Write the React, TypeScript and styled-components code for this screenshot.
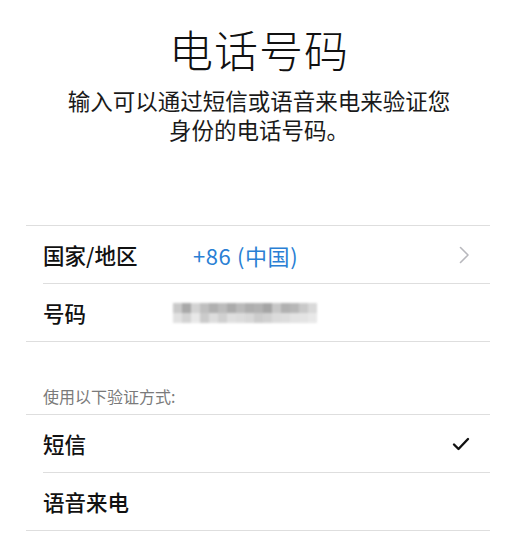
import React from 'react';
import styled, { createGlobalStyle } from 'styled-components';

const GlobalStyle = createGlobalStyle`
  html, body {
    margin: 0;
    padding: 0;
    background: #ffffff;
  }
  body {
    font-family: "Noto Sans CJK SC", "Noto Sans", sans-serif;
    color: #111;
  }
`;

const Page = styled.div`
  width: 518px;
  min-height: 545px;
  display: flex;
  flex-direction: column;
  background: #fff;
`;

const Title = styled.h1`
  margin: 24px 0 0;
  text-align: center;
  font-size: 44px;
  line-height: 50px;
  font-weight: 200;
  letter-spacing: 1px;
  color: #111;
`;

const Subtitle = styled.p`
  margin: 12px 0 0;
  text-align: center;
  font-size: 22.5px;
  line-height: 29px;
  font-weight: 400;
  color: #1a1a1a;
`;

const Group = styled.div<{ $top: number }>`
  margin: ${(p) => p.$top}px 28px 0 26px;
  border-top: 1px solid #dedede;
  border-bottom: 1px solid #dedede;
  display: flex;
  flex-direction: column;
`;

const Row = styled.div`
  display: flex;
  padding-left: 17px;
`;

const RowInner = styled.div<{ $last?: boolean }>`
  flex: 1;
  height: 57px;
  display: flex;
  align-items: center;
  padding-right: 20px;
  border-bottom: ${(p) => (p.$last ? 'none' : '1px solid #dedede')};
`;

const Label = styled.span<{ $width?: number }>`
  width: ${(p) => (p.$width ? `${p.$width}px` : 'auto')};
  font-size: 21.5px;
  font-weight: 500;
  color: #111;
  flex-shrink: 0;
`;

const Value = styled.span`
  flex: 1;
  font-size: 22px;
  letter-spacing: 0.6px;
  color: #2a7fd4;
`;

const Spacer = styled.span`
  flex: 1;
`;

const BlurField = styled.div`
  display: grid;
  grid-template-columns: repeat(16, 9px);
  grid-template-rows: repeat(2, 10px);
  filter: blur(1.2px);
  opacity: 0.9;
`;

const Cell = styled.span``;

const SectionHeader = styled.div`
  padding: 44px 0 8px 43px;
  font-size: 16px;
  line-height: 20px;
  color: #7a7a7a;
`;

const blurTop = ['#c4c4c4', '#a0a0a0', '#cfcfcf', '#b9b9b9', '#a8a8a8', '#b5b5b5', '#a3a3a3', '#b3b3b3', '#a6a6a6', '#aaaaaa', '#9c9c9c', '#c2c2c2', '#a9a9a9', '#b0b0b0', '#c4c4c4', '#d5d5d5'];
const blurBottom = ['#dedede', '#cfcfcf', '#e6e6e6', '#c6c6c6', '#dadada', '#cccccc', '#dcdcdc', '#d9d9d9', '#d4d4d4', '#c7c7c7', '#cdcdcd', '#d8d8d8', '#dadada', '#e0e0e0', '#e2e2e2', '#e6e6e6'];

const Chevron = () => (
  <svg width="11" height="18" viewBox="0 0 11 18" fill="none">
    <path d="M1.5 1.5 L9 9 L1.5 16.5" stroke="#b8b8bd" strokeWidth="1.6" strokeLinecap="round" strokeLinejoin="round" />
  </svg>
);

const Check = () => (
  <svg width="18" height="14" viewBox="0 0 18 14" fill="none">
    <path d="M2 7.5 L6.5 12 L16 2" stroke="#111" strokeWidth="2.4" strokeLinecap="round" strokeLinejoin="round" />
  </svg>
);

const App: React.FC = () => {
  return (
    <Page>
      <GlobalStyle />
      <Title>电话号码</Title>
      <Subtitle>
        输入可以通过短信或语音来电来验证您
        <br />
        身份的电话号码。
      </Subtitle>

      <Group $top={81}>
        <Row>
          <RowInner>
            <Label $width={150}>国家/地区</Label>
            <Value>+86 (中国)</Value>
            <Chevron />
          </RowInner>
        </Row>
        <Row>
          <RowInner $last>
            <Label $width={130}>号码</Label>
            <BlurField>
              {blurTop.map((c, i) => (
                <Cell key={`t${i}`} style={{ background: c }} />
              ))}
              {blurBottom.map((c, i) => (
                <Cell key={`b${i}`} style={{ background: c }} />
              ))}
            </BlurField>
          </RowInner>
        </Row>
      </Group>

      <SectionHeader>使用以下验证方式:</SectionHeader>

      <Group $top={0}>
        <Row>
          <RowInner>
            <Label>短信</Label>
            <Spacer />
            <Check />
          </RowInner>
        </Row>
        <Row>
          <RowInner $last>
            <Label>语音来电</Label>
          </RowInner>
        </Row>
      </Group>
    </Page>
  );
};

export default App;
